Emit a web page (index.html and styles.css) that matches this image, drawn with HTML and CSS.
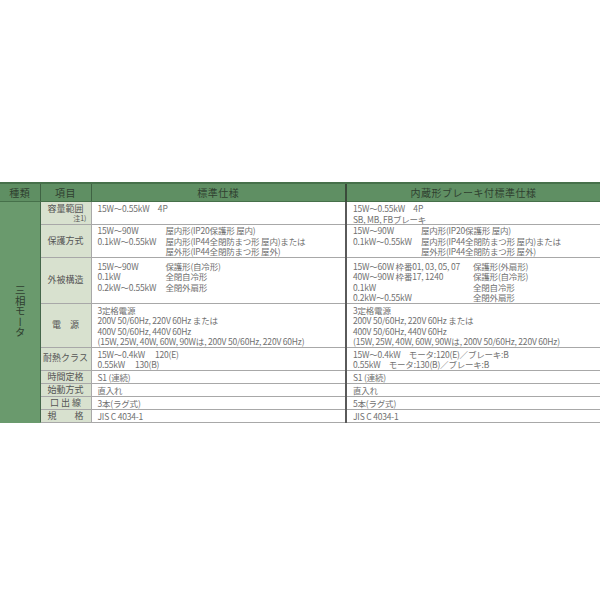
FILE: index.html
```html
<!DOCTYPE html>
<html lang="ja">
<head>
<meta charset="utf-8">
<link rel="stylesheet" href="styles.css">
</head>
<body>
<div class="page">
<table class="spec">
  <colgroup>
    <col class="c-kind"><col class="c-item"><col class="c-std"><col class="c-brk">
  </colgroup>
  <thead>
    <tr>
      <th>種類</th><th>項目</th><th>標準仕様</th><th class="brk">内蔵形ブレーキ付標準仕様</th>
    </tr>
  </thead>
  <tbody>
    <tr class="r-cap">
      <td class="kind" rowspan="9"><span class="vert">三相モータ</span></td>
      <td class="item"><div>容量範囲</div><div class="note">注1)</div></td>
      <td>15W～0.55kW　4P</td>
      <td class="brk">15W～0.55kW　4P<br>SB, MB, FBブレーキ</td>
    </tr>
    <tr class="r-prot">
      <td class="item">保護方式</td>
      <td>
        <div class="ln"><span class="k1">15W～90W</span>屋内形(IP20保護形 屋内)</div>
        <div class="ln"><span class="k1">0.1kW～0.55kW</span>屋内形(IP44全閉防まつ形 屋内)または</div>
        <div class="ln"><span class="k1">&nbsp;</span>屋外形(IP44全閉防まつ形 屋外)</div>
      </td>
      <td class="brk">
        <div class="ln"><span class="k1">15W～90W</span>屋内形(IP20保護形 屋内)</div>
        <div class="ln"><span class="k1">0.1kW～0.55kW</span>屋内形(IP44全閉防まつ形 屋内)または</div>
        <div class="ln"><span class="k1">&nbsp;</span>屋外形(IP44全閉防まつ形 屋外)</div>
      </td>
    </tr>
    <tr class="r-enc">
      <td class="item">外被構造</td>
      <td>
        <div class="ln"><span class="k1">15W～90W</span>保護形(自冷形)</div>
        <div class="ln"><span class="k1">0.1kW</span>全閉自冷形</div>
        <div class="ln"><span class="k1">0.2kW～0.55kW</span>全閉外扇形</div>
      </td>
      <td class="brk">
        <div class="ln"><span class="k2">15W～60W 枠番01, 03, 05, 07</span>保護形(外扇形)</div>
        <div class="ln"><span class="k2">40W～90W 枠番17, 1240</span>保護形(自冷形)</div>
        <div class="ln"><span class="k2">0.1kW</span>全閉自冷形</div>
        <div class="ln"><span class="k2">0.2kW～0.55kW</span>全閉外扇形</div>
      </td>
    </tr>
    <tr class="r-pow">
      <td class="item">電　源</td>
      <td>3定格電源<br>200V 50/60Hz, 220V 60Hz または<br>400V 50/60Hz, 440V 60Hz<br>(15W, 25W, 40W, 60W, 90Wは, 200V 50/60Hz, 220V 60Hz)</td>
      <td class="brk">3定格電源<br>200V 50/60Hz, 220V 60Hz または<br>400V 50/60Hz, 440V 60Hz<br>(15W, 25W, 40W, 60W, 90Wは, 200V 50/60Hz, 220V 60Hz)</td>
    </tr>
    <tr class="r-heat">
      <td class="item">耐熱クラス</td>
      <td>15W～0.4kW　 120(E)<br>0.55kW　 130(B)</td>
      <td class="brk">15W～0.4kW　モータ:120(E)／ブレーキ:B<br>0.55kW　モータ:130(B)／ブレーキ:B</td>
    </tr>
    <tr class="r-one">
      <td class="item">時間定格</td>
      <td>S1 (連続)</td>
      <td class="brk">S1 (連続)</td>
    </tr>
    <tr class="r-one">
      <td class="item">始動方式</td>
      <td>直入れ</td>
      <td class="brk">直入れ</td>
    </tr>
    <tr class="r-one">
      <td class="item">口 出 線</td>
      <td>3本(ラグ式)</td>
      <td class="brk">5本(ラグ式)</td>
    </tr>
    <tr class="r-one last">
      <td class="item">規　　格</td>
      <td>JIS C 4034-1</td>
      <td class="brk">JIS C 4034-1</td>
    </tr>
  </tbody>
</table>
</div>
</body>
</html>
```

FILE: styles.css
```css
html, body {
  margin: 0;
  padding: 0;
  background: #ffffff;
}

.page {
  padding-top: 182px;
  width: 600px;
}

.spec {
  width: 600px;
  border-collapse: collapse;
  table-layout: fixed;
  font-family: "Noto Sans CJK JP", "Noto Sans", sans-serif;
  font-size: 8.5px;
  letter-spacing: -0.2px;
  line-height: 10.5px;
  color: #707070;
}

.c-kind { width: 40px; }
.c-item { width: 51px; }
.c-std { width: 255px; }
.c-brk { width: 254px; }

.spec th {
  background: #5f8f63;
  color: #2f3f30;
  font-weight: normal;
  font-size: 10px;
  line-height: 14px;
  height: 17px;
  padding: 0;
  border-top: 2px solid #46704a;
  border-bottom: 1px solid #46704a;
  border-left: 1px solid #3f6243;
  text-align: center;
  letter-spacing: 0.5px;
}

.spec th:first-child { border-left: none; }

.spec td {
  padding: 0 6px;
  vertical-align: top;
  border-bottom: 1px solid #a8a8a8;
  white-space: nowrap;
  overflow: hidden;
}

.spec .brk {
  border-left: 2px solid #5a5a5a;
}

.spec th.brk {
  border-left: 2px solid #3a4a3a;
}

.spec td.kind {
  background: #6a9a6d;
  border-bottom: 1px solid #6a9a6d;
  border-right: 1px solid #44664a;
  vertical-align: middle;
  text-align: center;
  padding: 0;
  color: #2f3f30;
  letter-spacing: 0;
}

.vert {
  writing-mode: vertical-rl;
  text-orientation: upright;
  font-size: 10.5px;
  line-height: 12px;
  display: inline-block;
}

.spec td.item {
  background: #d8e1cf;
  color: #555555;
  text-align: center;
  vertical-align: middle;
  padding: 0 2px;
  border-right: 1px solid #a8a8a8;
  font-size: 9px;
  letter-spacing: 0;
}

.note {
  text-align: right;
  font-size: 7px;
  line-height: 8px;
  padding-right: 2px;
}

.ln {
  height: 10.5px;
  line-height: 10.5px;
}

.k1 {
  display: inline-block;
  vertical-align: top;
  width: 68px;
}

.k2 {
  display: inline-block;
  vertical-align: top;
  width: 120px;
}

.r-cap td { height: 21px; padding-top: 1px; }
.r-cap td.item { padding-top: 0; }
.r-enc td { padding-top: 3px; }
.r-pow td { padding-top: 1px; }
.r-heat td { padding-top: 1px; }
.r-one td { height: 12px; line-height: 12px; }
.spec .r-enc td.item,
.spec .r-pow td.item,
.spec .r-heat td.item { padding-top: 0; }
```
